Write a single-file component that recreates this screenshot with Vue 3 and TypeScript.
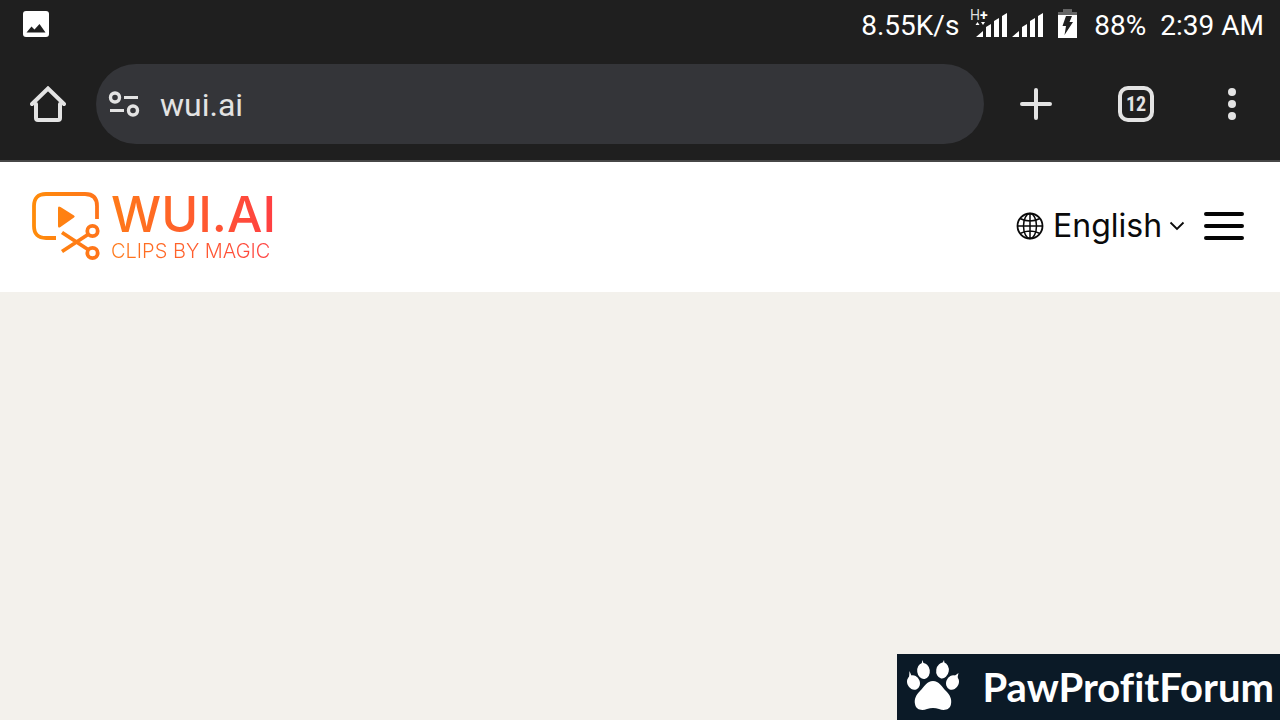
<script setup lang="ts">
import { ref } from 'vue'

const address = ref<string>('wui.ai')
const language = ref<string>('English')
const languages: string[] = ['English']
const openTabs = 12
</script>

<template>
  <div class="screen">
    <div class="status">
      <svg class="picture" width="26" height="26" viewBox="0 0 26 26" aria-hidden="true">
        <rect width="26" height="26" rx="3" fill="#fff" />
        <path d="M3.500 21.500 8.500 15.500 11.500 18.500 16.500 13 22.500 21.500Z" fill="#1f1f1f" />
      </svg>
      <span class="speed">8.55K/s</span>
      <svg class="signal" width="73" height="32" viewBox="0 0 73 32" aria-hidden="true">
        <text class="network" x="-1" y="12">H<tspan class="plus">+</tspan></text>
        <g fill="#fff">
          <path d="M4.500 17 6.500 14 8.500 17ZM10 14H14L12 17Z" />
          <path d="M5 29 12 23V29ZM15 29V19L20 16V29ZM23 29V13L28 10V29ZM31 29V8L36 5V29Z" />
          <path d="M41 29 48 23V29ZM51 29V19L56 16V29ZM59 29V13L64 10V29ZM67 29V8L72 5V29Z" />
        </g>
      </svg>
      <svg class="battery" width="19" height="30" viewBox="0 0 19 30" aria-hidden="true">
        <path d="M5 0H14V3H19V6H0V3H5Z" fill="#656565" />
        <path d="M0 6H19V29H0Z" fill="#fff" />
        <path d="M8 7H14L11.500 13H15L6.500 26 8 17H4.500Z" fill="#1f1f1f" />
      </svg>
      <span class="percent">88%</span>
      <time>2:39 AM</time>
    </div>

    <nav class="toolbar" aria-label="Browser">
      <button class="home" type="button" aria-label="Home">
        <svg width="36" height="36" viewBox="0 0 36 36" fill="none" stroke="#e3e3e3" stroke-width="4" stroke-linejoin="round" stroke-linecap="round">
          <path d="M6 18V32Q6 34 8 34H28Q30 34 30 32V18" />
          <path d="M2 18 18 2.500 34 18" stroke-linejoin="miter" />
        </svg>
      </button>
      <div class="omnibox">
        <button type="button" aria-label="Site information">
          <svg width="32" height="28" viewBox="0 0 32 28" fill="none" stroke="#e3e3e3">
            <circle cx="7" cy="7.500" r="4.500" stroke-width="3.400" />
            <circle cx="25" cy="20.500" r="4.500" stroke-width="3.400" />
            <path d="M16 7.500H30M2 20.500H16" stroke-width="3" />
          </svg>
        </button>
        <input v-model="address" type="text" aria-label="Address" spellcheck="false" />
      </div>
      <div class="actions">
        <button type="button" aria-label="New tab">
          <svg width="32" height="32" viewBox="0 0 32 32" stroke="#e3e3e3" stroke-width="4" stroke-linecap="round">
            <path d="M16 2V30M2 16H30" />
          </svg>
        </button>
        <button class="tabs" type="button" aria-label="Open tabs">{{ openTabs }}</button>
        <button class="more" type="button" aria-label="More">
          <svg width="8" height="32" viewBox="0 0 8 32" fill="#e3e3e3">
            <circle cx="4" cy="4" r="4" />
            <circle cx="4" cy="16" r="4" />
            <circle cx="4" cy="28" r="4" />
          </svg>
        </button>
      </div>
    </nav>

    <header class="site">
      <a class="brand" href="#">
        <svg width="68" height="70" viewBox="0 1 68 70" fill="none" aria-hidden="true">
          <defs>
            <linearGradient id="mark" x1="0" y1="0" x2="68" y2="0" gradientUnits="userSpaceOnUse">
              <stop stop-color="#ff8c0a" />
              <stop offset="1" stop-color="#ff741b" />
            </linearGradient>
          </defs>
          <g stroke="url(#mark)" stroke-width="3.800">
            <path d="M24 48H14Q2 48 2 36V16Q2 4 14 4H53Q65 4 65 16V29" />
            <path d="M30 42.500 56 59.500M30 61.500 56 44.500" />
            <circle cx="60.500" cy="41" r="5.200" />
            <circle cx="60.500" cy="63" r="5.200" />
          </g>
          <path d="M26 18Q26 15.500 28.500 17L42 25.500Q43.500 26.500 42 27.500L28.500 37Q26 38.500 26 36Z" fill="url(#mark)" />
        </svg>
        <span class="words">
          <span class="name">WUI.AI</span>
          <span class="motto">CLIPS BY MAGIC</span>
        </span>
      </a>
      <div class="controls">
        <label class="language">
          <svg width="28" height="28" viewBox="0 0 28 28" fill="none" stroke="#0a0a0a" stroke-width="1.500" aria-hidden="true">
            <circle cx="14" cy="14" r="12.500" stroke-width="1.800" />
            <ellipse cx="14" cy="14" rx="6.500" ry="12.500" />
            <path d="M14 1.500V26.500M1.500 14H26.500M4 6.500Q14 11.500 24 6.500M4 21.500Q14 16.500 24 21.500" />
          </svg>
          <select v-model="language" aria-label="Language">
            <option v-for="item in languages" :key="item">{{ item }}</option>
          </select>
          <svg width="16" height="10" viewBox="0 0 16 10" fill="none" stroke="#0a0a0a" stroke-width="1.800" aria-hidden="true">
            <path d="M1.500 1.500 8 8 14.500 1.500" />
          </svg>
        </label>
        <button class="menu" type="button" aria-label="Menu">
          <svg width="40" height="28" viewBox="0 0 40 28" stroke="#050505" stroke-width="4" stroke-linecap="round">
            <path d="M2 2H38M2 14H38M2 26H38" />
          </svg>
        </button>
      </div>
    </header>

    <main class="page">
      <div class="forum">
        <svg width="52" height="54" viewBox="0 1 52 54" fill="#fff" aria-hidden="true">
          <path d="M26 22C32 22 35 28 39 32C43 36 45 40 44 45C43 51 37 52 32 50Q26 48 20 50C15 52 9 51 8 45C7 40 9 36 13 32C17 28 20 22 26 22Z" />
          <ellipse cx="16.500" cy="12" rx="6.300" ry="8" transform="rotate(-8 16.500 12)" />
          <ellipse cx="35.500" cy="11.500" rx="6.300" ry="8" transform="rotate(10 35.500 11.500)" />
          <ellipse cx="6.500" cy="23.500" rx="6.300" ry="7.500" transform="rotate(-22 6.500 23.500)" />
          <ellipse cx="45.500" cy="23.500" rx="6.300" ry="7.500" transform="rotate(22 45.500 23.500)" />
          <path d="M14 7 15.500 1 17 6ZM34.500 6 37 1 38 7ZM2 19 2.500 12 5 18ZM46 18 51.500 14 50 21Z" />
        </svg>
        <span>PawProfitForum</span>
      </div>
    </main>
  </div>
</template>

<style>
body {
  margin: 0;
}
</style>

<style scoped>
.screen {
  display: flex;
  flex-direction: column;
  min-height: 100vh;
  font-family: Roboto, "Liberation Sans", sans-serif;
}

button {
  display: flex;
  align-items: center;
  justify-content: center;
  padding: 0;
  border: 0;
  background: none;
  color: inherit;
  font: inherit;
}

svg {
  display: block;
  flex: none;
}

.status {
  display: flex;
  align-items: center;
  height: 48px;
  padding: 0 16px 0 23px;
  background: #1f1f1f;
  color: #fff;
  font-size: 28px;
  line-height: 48px;
}

.status span,
.status time {
  padding-top: 3px;
}

.speed {
  margin-left: auto;
}

.signal {
  margin-left: 12px;
  overflow: visible;
}

.network {
  fill: #ddd;
  font-size: 14px;
}

.plus {
  fill: #fff;
  font-weight: 700;
}

.battery {
  margin: 0 17px 0 14px;
}

.percent {
  margin-right: 14px;
}

.toolbar {
  display: flex;
  align-items: center;
  height: 112px;
  border-bottom: 2px solid #474747;
  background: #1f1f1f;
  color: #e3e3e3;
}

.home {
  width: 96px;
  height: 80px;
}

.omnibox {
  display: flex;
  flex: 1;
  align-items: center;
  gap: 20px;
  height: 80px;
  padding: 0 32px 0 12px;
  box-sizing: border-box;
  border-radius: 40px;
  background: #343539;
}

.omnibox input {
  flex: 1;
  min-width: 0;
  padding: 2px 0 0;
  border: 0;
  outline: 0;
  background: none;
  color: #e3e3e3;
  font: 32px/40px Roboto, "Liberation Sans", sans-serif;
}

.actions {
  display: flex;
  align-items: center;
  justify-content: space-between;
  padding: 0 44px 0 36px;
}

.tabs {
  width: 36px;
  height: 36px;
  margin: 0 74px 0 66px;
  box-sizing: border-box;
  border: 4px solid #e3e3e3;
  border-radius: 10px;
  font: 700 20px/28px "Roboto Condensed", Roboto, sans-serif;
}

.site {
  display: flex;
  align-items: center;
  justify-content: space-between;
  height: 128px;
  padding: 0 36px 2px 32px;
  background: #fff;
  font-family: Inter, "Liberation Sans", sans-serif;
}

.brand {
  display: flex;
  align-items: center;
  gap: 11px;
  text-decoration: none;
}

.words {
  display: flex;
  flex-direction: column;
  background: linear-gradient(90deg, #ff7a18, #ff3f43);
  background-clip: text;
  color: transparent;
}

.name {
  font-size: 50px;
  font-weight: 500;
  line-height: 50px;
}

.motto {
  font-size: 20px;
  font-weight: 300;
  line-height: 24px;
}

.controls,
.language {
  display: flex;
  align-items: center;
}

.controls {
  gap: 19px;
}

.language select {
  margin: 0 6px 0 9px;
  padding: 0;
  border: 0;
  outline: 0;
  appearance: none;
  background: none;
  color: #0a0a0a;
  font: 32px/40px Inter, "Liberation Sans", sans-serif;
}

.page {
  display: flex;
  flex: 1;
  align-items: flex-end;
  justify-content: flex-end;
  background: #f3f1ec;
}

.forum {
  display: flex;
  align-items: center;
  gap: 23px;
  height: 66px;
  padding: 0 6px 0 10px;
  background: #0b1a27;
  color: #fff;
  font: 700 40px/66px Lato, "Liberation Sans", sans-serif;
  font-variant-ligatures: none;
}
</style>
